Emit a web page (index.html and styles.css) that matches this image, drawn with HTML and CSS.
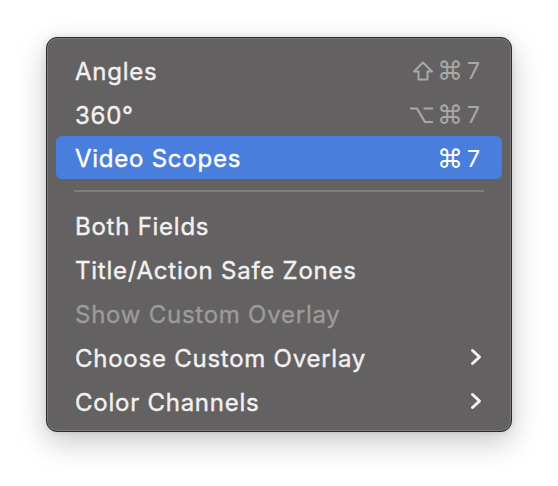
FILE: index.html
```html
<!DOCTYPE html>
<html>
<head>
<meta charset="utf-8">
<link rel="stylesheet" href="styles.css">
</head>
<body>
<div class="menu">
  <div class="item"><span class="label">Angles</span><span class="keys"><svg class="mod" width="22" height="20" viewBox="0 0 22 20"><path d="M11 1.5 L20 10.5 H15.5 V18.5 H6.5 V10.5 H2 Z" fill="none" stroke="currentColor" stroke-width="2" stroke-linejoin="round"/></svg><span class="k">⌘</span><span class="k7">7</span></span></div>
  <div class="item"><span class="label">360°</span><span class="keys"><svg class="mod" width="25" height="20" viewBox="0 0 25 20"><path d="M1 3.5 H8 L16 17 H24 M14.5 3.5 H24" fill="none" stroke="currentColor" stroke-width="2.2"/></svg><span class="k">⌘</span><span class="k7">7</span></span></div>
  <div class="item active"><span class="label">Video Scopes</span><span class="keys"><span class="k">⌘</span><span class="k7">7</span></span></div>
  <div class="sep"></div>
  <div class="item"><span class="label">Both Fields</span></div>
  <div class="item"><span class="label">Title/Action Safe Zones</span></div>
  <div class="item disabled"><span class="label">Show Custom Overlay</span></div>
  <div class="item"><span class="label">Choose Custom Overlay</span><svg class="chev" width="12" height="18" viewBox="0 0 12 18"><polyline points="2.5,2.5 9.5,9 2.5,15.5" fill="none" stroke="#f4f2f2" stroke-width="3" stroke-linecap="round" stroke-linejoin="round"/></svg></div>
  <div class="item"><span class="label">Color Channels</span><svg class="chev" width="12" height="18" viewBox="0 0 12 18"><polyline points="2.5,2.5 9.5,9 2.5,15.5" fill="none" stroke="#f4f2f2" stroke-width="3" stroke-linecap="round" stroke-linejoin="round"/></svg></div>
</div>
</body>
</html>
```
FILE: styles.css
```css
html, body {
  margin: 0;
  padding: 0;
  background: #ffffff;
}
body {
  width: 558px;
  height: 486px;
  overflow: hidden;
  font-family: Inter, "Noto Sans", "DejaVu Sans", sans-serif;
}
.menu {
  box-sizing: border-box;
  margin: 37px 0 0 46px;
  width: 466px;
  height: 395px;
  padding: 10px 9px 0 9px;
  background: #636161;
  border: 1px solid #2e2d2d;
  border-radius: 11px;
  box-shadow: inset 0 0 0 1px #7b7979, 0 10px 30px rgba(0, 0, 0, 0.22), 0 0 6px rgba(0, 0, 0, 0.1);
}
.item {
  height: 44px;
  display: flex;
  align-items: center;
  padding: 0 20px 0 19px;
  border-radius: 6px;
  color: #f2f0f0;
  font-size: 24px;
  font-weight: 400;
  letter-spacing: 0.75px;
}
.item .label {
  flex: 1;
  padding-top: 2px;
  -webkit-text-stroke: 0.4px currentColor;
}
.item.active {
  background: #4a7edc;
  height: 43px;
  color: #ffffff;
}
.item.disabled {
  color: #9c9a9a;
}
.keys {
  display: flex;
  align-items: center;
  color: #a9a7a7;
  font-size: 23px;
  padding-top: 2px;
  margin-right: 2px;
  letter-spacing: 0;
}
.active .keys {
  color: #ffffff;
}
.mod {
  margin-right: 3px;
  margin-top: -1px;
}
.k {
  font-family: "DejaVu Sans", sans-serif;
  font-size: 26px;
  font-weight: 400;
  margin-right: 4px;
}
.k7 {
  font-family: Inter, sans-serif;
}
.sep {
  height: 2px;
  margin: 11px 18px 11px 18px;
  background: #7f7d7d;
}
```
